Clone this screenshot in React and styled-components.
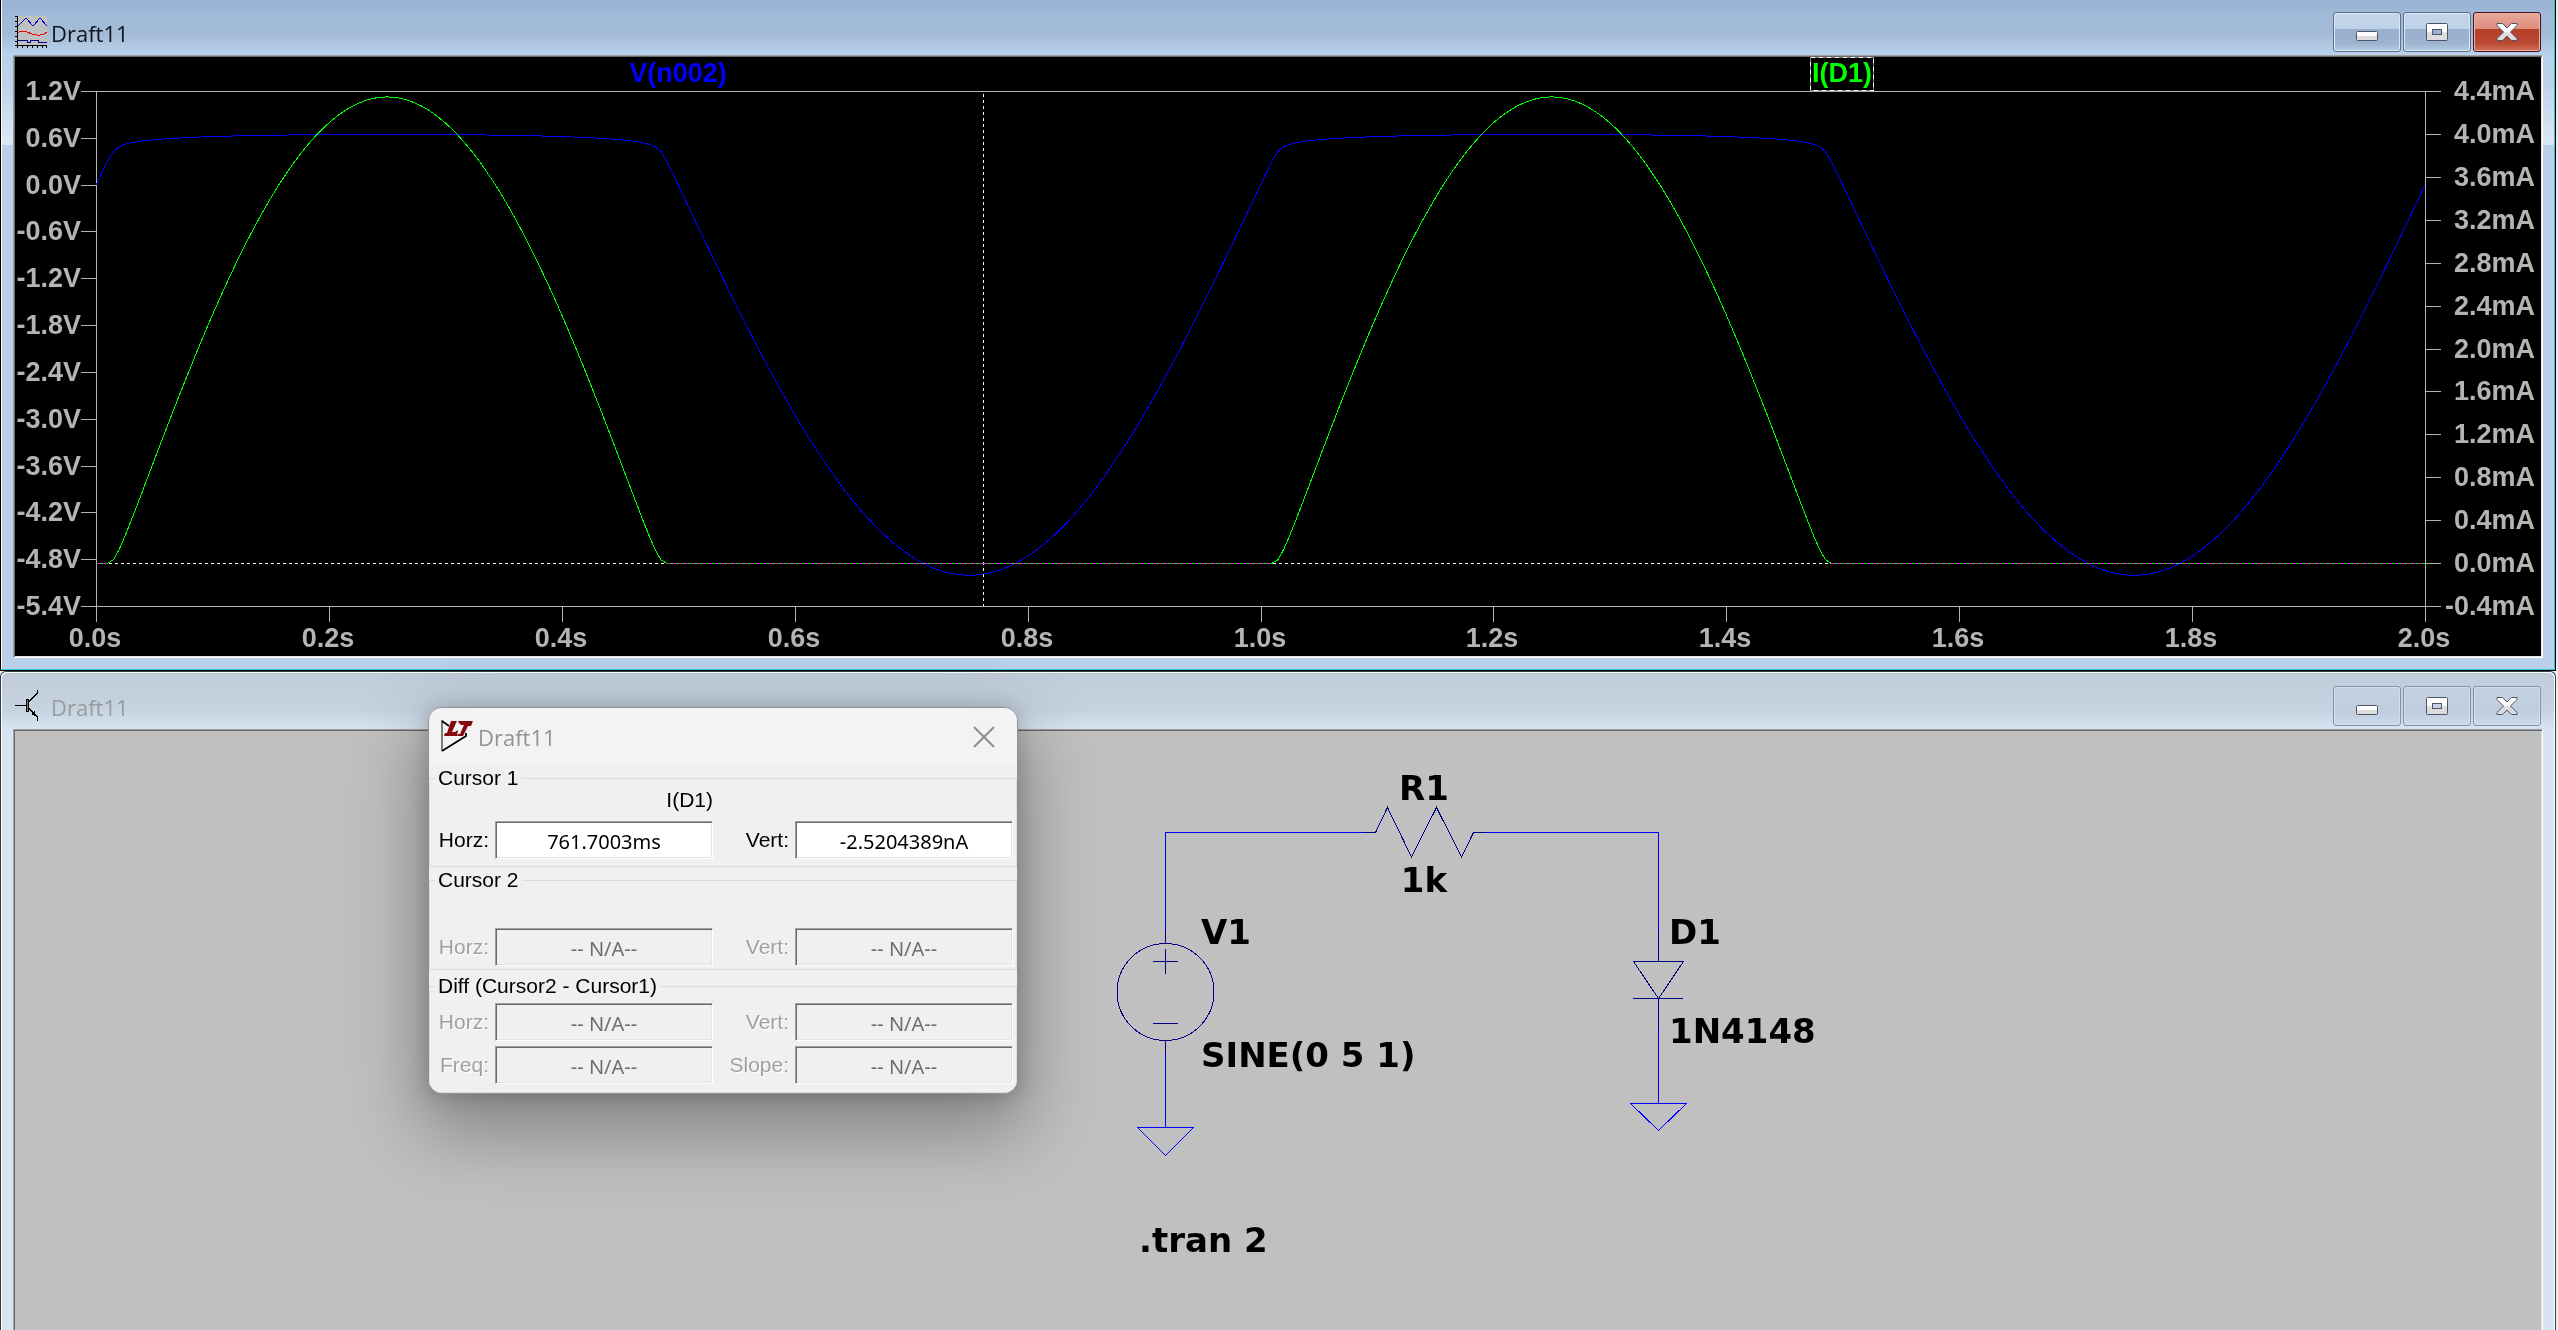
import React, { useLayoutEffect, useMemo, useRef, useState } from "react";
import styled, { createGlobalStyle, css } from "styled-components";

const GlobalStyle = createGlobalStyle`
  * { box-sizing: border-box; }
  html, body { margin: 0; padding: 0; }
  body { background: #ececec; overflow: hidden; }
`;

const uiFont = `"Liberation Sans", Arial, sans-serif`;
const titleFont = `"Open Sans", "Noto Sans", sans-serif`;
const valueFont = `"Noto Sans", Tahoma, sans-serif`;

/* ---------- desktop and document windows ---------- */

const Desktop = styled.main`
  display: grid;
  grid-template-rows: 671fr 659fr;
  height: 100vh;
  padding-right: 2px;
  overflow: hidden;
  font-family: ${uiFont};
`;

const activeFrame = css`
  border-color: #000;
  border-top-width: 0;
  border-radius: 0;
  background: #b9d1ea;
`;

const inactiveFrame = css`
  border-color: #3c3c44;
  border-bottom-width: 0;
  border-radius: 6px 6px 0 0;
  background: #d7e4f2;
`;

const WindowShell = styled.section`
  position: relative;
  display: flex;
  min-height: 0;
  border: 1px solid;
  ${(p) => (p.$active ? activeFrame : inactiveFrame)}
`;

const WindowFrame = styled.div`
  flex: 1;
  min-width: 0;
  display: flex;
  flex-direction: column;
  padding: 0 11px ${(p) => (p.$active ? 11 : 0)}px;
  border-style: solid;
  border-color: #fff;
  border-width: ${(p) => (p.$active ? "0 1px 1px" : "1px 1px 0")};
  border-radius: inherit;
  ${(p) =>
    p.$active
      ? css`
          border-right-color: #35c4e0;
          border-bottom-color: #35c4e0;
          background:
            linear-gradient(#98b3d1, #9fbad8 16px, #a3bbd6 34px, #b9d1ea 54px) 0 0 / 100% 55px no-repeat,
            linear-gradient(#b9d1ea, #bdd3eb 30px, #dbe7f4 86px, #dbe7f4) 0 55px / 100% 90px no-repeat,
            #b9cfea;
        `
      : css`
          background:
            linear-gradient(#bccad8, #c2cedb 10px, #c5d2e0 36px, #d7e4f2 56px) 0 0 / 100% 56px no-repeat,
            #d7e4f2;
        `}
`;

const TitleBar = styled.header`
  flex: none;
  display: flex;
  align-items: center;
  height: ${(p) => (p.$active ? 55 : 56)}px;
  padding: ${(p) => (p.$active ? "9px 2px 0" : "10px 2px 0")};
  gap: 4px;
`;

const WindowTitle = styled.h2`
  flex: 1;
  margin: 0;
  padding-top: 1px;
  font: 400 22px/32px ${titleFont};
  color: ${(p) => (p.$active ? "#10141c" : "#9a9a9a")};
`;

const ButtonGroup = styled.div`
  display: flex;
  gap: 2px;
`;

const tones = {
  active: css`
    border-color: #5d6f8a;
    background: linear-gradient(#c3d5ea, #bdd1e8 16px, #98b0cd 16px, #9cb4d0 30px, #b4cbe4);
    box-shadow: inset 0 0 0 1px #dbe8f6;
  `,
  inactive: css`
    border-color: #8292ac;
    background: linear-gradient(#c4d1e0, #c2cfdf 16px, #bfcde0 24px, #cbd9ea);
    box-shadow: inset 0 0 0 1px #d3dfec;
  `,
  danger: css`
    border-color: #47101c;
    background: linear-gradient(#e7a99b, #de8c7c 16px, #b5402a 16px, #bb4832 30px, #d0705a);
    box-shadow: inset 0 0 0 1px #eab5a8;
  `,
};

const CaptionButton = styled.button`
  display: flex;
  align-items: center;
  justify-content: center;
  width: 68px;
  height: 40px;
  padding: 0;
  border: 1px solid;
  border-radius: 3px;
  ${(p) => tones[p.$tone]}
`;

const Client = styled.div`
  flex: 1;
  min-height: 0;
  padding: 1px;
  overflow: hidden;
  border-style: solid;
  border-width: 1px 1px ${(p) => (p.$open ? 0 : 1)}px;
  border-color: #a0a0a0 #fff #fff #a0a0a0;
  background: ${(p) => p.$fill};
  box-shadow: inset 1px 1px 0 #696969, inset -1px ${(p) => (p.$open ? 0 : -1)}px 0 #e3e3e3;
`;

const Fill = styled.div`
  width: 100%;
  height: 100%;
  overflow: hidden;
`;

const Drawing = styled.svg`
  display: block;
`;

const PlotIcon = () => (
  <Drawing width="32" height="32" viewBox="0 0 32 32" shapeRendering="crispEdges" fill="none" aria-hidden="true">
    <rect x="3" width="29" height="29" fill="#c0c0c0" />
    <path d="M2.5 0V32M0 .5h2M0 5.500h2M0 10.500h2M0 15.500h2M0 20.500h2M0 25.500h2M0 29.500h32M7.500 30v2M12.500 30v2M17.500 30v2M22.500 30v2M27.500 30v2M31.500 30v2" stroke="#000" />
    <path d="M3 10l8-8 7 8 7-8 7 8" stroke="#0000c8" />
    <path d="M3 16.500c6-3 10 0 14 1.500s11 2 15-2" stroke="#f00000" />
    <path d="M3 24.500h9v2h3v-2h8v2h9" stroke="#000090" />
  </Drawing>
);

const TransistorIcon = () => (
  <Drawing width="32" height="32" viewBox="0 0 32 32" shapeRendering="crispEdges" fill="none" stroke="#000" aria-hidden="true">
    <path d="M0 15.500h11M14 11.500l8.500-8.500V0M14 18.500l8.500 8.500v4" />
    <rect x="11.500" y="9.500" width="2" height="12" fill="#777" />
    <path d="M16 24l4-4v3l3 4.500z" fill="#000" stroke="none" />
  </Drawing>
);

const LogoIcon = () => (
  <Drawing width="34" height="34" viewBox="0 0 34 34" aria-hidden="true">
    <path d="M1 0v31" stroke="#555" strokeWidth="1.500" fill="none" />
    <path d="M1 1l7 5M1 31l24-15v-3" stroke="#000" strokeWidth="1.800" fill="none" />
    <path d="M10 1h6l-1 2-4 9h3l3-2-1 6H3l1-3h2z" fill="#86080e" />
    <path d="M17 1h15l-2 5h-3l-4 8-1 2h-6l1-2h2l4-9h-3l-2-2z" fill="#86080e" />
  </Drawing>
);

const CaptionGlyph = ({ kind, hole }) => (
  <Drawing width="22" height="18" viewBox="0 0 22 18" aria-hidden="true">
    <defs>
      <linearGradient id={`glyph-${kind}`} x1="0" y1="0" x2="0" y2="1">
        <stop offset="0.450" stopColor="#fff" />
        <stop offset="0.550" stopColor="#dcdcdc" />
      </linearGradient>
    </defs>
    <g fill={`url(#glyph-${kind})`} stroke="#4e5466">
      {kind === "min" && <rect x="0.500" y="8.500" width="21" height="9" rx="1" />}
      {kind === "max" && (
        <>
          <rect x="0.500" y="0.500" width="21" height="17" rx="1" />
          <rect x="6.500" y="6.500" width="9" height="5" fill={hole} />
        </>
      )}
      {kind === "close" && (
        <path d="M1 .5h5.500L11 5 15.500.5H21v2L14.500 9l6.500 6.500v2h-5.500L11 13l-4.500 4.500H1v-2L7.500 9 1 2.500z" strokeLinejoin="round" />
      )}
    </g>
  </Drawing>
);

function DocumentWindow({ title, icon, active, fill, children, overlay }) {
  const tone = active ? "active" : "inactive";
  return (
    <WindowShell $active={active} aria-label={title}>
      <WindowFrame $active={active}>
        <TitleBar $active={active}>
          {icon}
          <WindowTitle $active={active}>{title}</WindowTitle>
          <ButtonGroup>
            <CaptionButton type="button" $tone={tone} aria-label="Minimize">
              <CaptionGlyph kind="min" />
            </CaptionButton>
            <CaptionButton type="button" $tone={tone} aria-label="Maximize">
              <CaptionGlyph kind="max" hole={active ? "#98b4d0" : "#c5d1e0"} />
            </CaptionButton>
            <CaptionButton type="button" $tone={active ? "danger" : tone} aria-label="Close">
              <CaptionGlyph kind="close" />
            </CaptionButton>
          </ButtonGroup>
        </TitleBar>
        <Client $fill={fill} $open={!active}>
          {children}
        </Client>
      </WindowFrame>
      {overlay}
    </WindowShell>
  );
}

/* ---------- waveform plot ---------- */

const AxisText = styled.text`
  font: 700 27px ${uiFont};
  fill: #b4b4b4;
`;

const TraceName = styled(AxisText)`
  fill: ${(p) => p.$color};
`;

function useSize() {
  const ref = useRef(null);
  const [size, setSize] = useState({ width: 0, height: 0 });
  useLayoutEffect(() => {
    const node = ref.current;
    const read = () => setSize({ width: node.clientWidth, height: node.clientHeight });
    read();
    const observer = new ResizeObserver(read);
    observer.observe(node);
    return () => observer.disconnect();
  }, []);
  return [ref, size];
}

// 1N4148 fed from a 5 V, 1 Hz sine through 1 kOhm: bisect for the diode voltage.
function solveDiode(source) {
  const diodeCurrent = (v) => 2.52e-9 * (Math.exp(v / 0.0453) - 1);
  let lo = -5.1;
  let hi = 1;
  for (let i = 0; i < 50; i += 1) {
    const mid = (lo + hi) / 2;
    if (diodeCurrent(mid) > (source - mid) / 1000) hi = mid;
    else lo = mid;
  }
  return { volts: lo, amps: diodeCurrent(lo) };
}

const T_END = 2;
const V_TOP = 1.2;
const V_BOTTOM = -5.4;
const I_TOP = 4.4;
const I_BOTTOM = -0.4;
const CURSOR = 0.7617003;
const range = (n) => Array.from({ length: n }, (_, i) => i);
const fixed = (n) => (Math.abs(n) < 0.01 ? "0.0" : n.toFixed(1));

function WaveformPlot() {
  const [ref, { width, height }] = useSize();
  const samples = useMemo(
    () => range(401).map((i) => ({ t: i / 200, ...solveDiode(5 * Math.sin((2 * Math.PI * i) / 200)) })),
    []
  );

  const left = 81;
  const right = width - 116;
  const top = 34;
  const bottom = height - 50;
  const px = (n) => Math.round(n) + 0.5;
  const x = (t) => left + (t / T_END) * (right - left);
  const yV = (v) => top + ((V_TOP - v) / (V_TOP - V_BOTTOM)) * (bottom - top);
  const yI = (i) => top + ((I_TOP - i) / (I_TOP - I_BOTTOM)) * (bottom - top);
  const line = (f) => samples.map((s) => `${x(s.t).toFixed(1)},${(f(s) + 0.5).toFixed(1)}`).join(" ");
  const name2 = x(1.5);

  return (
    <Fill ref={ref}>
      {width > 0 && (
        <Drawing width={width} height={height} role="img" aria-label="V(n002) and I(D1) against time">
          <g stroke="#b4b4b4" shapeRendering="crispEdges" fill="none">
            <path d={`M${px(left)} ${top}V${bottom + 15}M${px(right)} ${top}V${bottom + 15}`} />
            <path d={`M${left - 15} ${px(top)}H${right + 16}M${left - 15} ${px(bottom)}H${right + 16}`} />
            {range(12).map((i) => (
              <path key={i} d={`M${left - 15} ${px(yV(V_TOP - i * 0.6))}h15`} />
            ))}
            {range(13).map((i) => (
              <path key={i} d={`M${right} ${px(yI(I_TOP - i * 0.4))}h16`} />
            ))}
            {range(11).map((i) => (
              <path key={i} d={`M${px(x(i * 0.2))} ${bottom}v16`} />
            ))}
          </g>

          <g fill="none" shapeRendering="crispEdges">
            <polyline points={line((s) => yV(s.volts))} stroke="#0000ff" />
            <polyline points={line((s) => yI(s.amps * 1000))} stroke="#00ff00" />
            <g stroke="#fff" strokeDasharray="3 3" style={{ mixBlendMode: "difference" }}>
              <path d={`M${left + 1} ${px(yI(0))}H${right}`} />
              <path d={`M${px(x(CURSOR))} ${top + 3}V${bottom}`} />
            </g>
          </g>

          {range(12).map((i) => (
            <AxisText key={i} x={left - 15} y={Math.round(yV(V_TOP - i * 0.6)) + 9} textAnchor="end">
              {fixed(V_TOP - i * 0.6)}V
            </AxisText>
          ))}
          {range(13).map((i) => (
            <AxisText key={i} x={width - 6} y={Math.round(yI(I_TOP - i * 0.4)) + 9} textAnchor="end">
              {fixed(I_TOP - i * 0.4)}mA
            </AxisText>
          ))}
          {range(11).map((i) => (
            <AxisText key={i} x={Math.round(x(i * 0.2)) - 1} y={bottom + 41} textAnchor="middle">
              {fixed(i * 0.2)}s
            </AxisText>
          ))}

          <TraceName $color="#0000ff" x={Math.round(x(0.5))} y="25" textAnchor="middle">
            V(n002)
          </TraceName>
          <g fill="none" shapeRendering="crispEdges">
            <rect x={px(name2 - 33)} y="0.5" width="63" height="33" stroke="#808080" />
            <rect x={px(name2 - 33)} y="0.5" width="63" height="33" stroke="#fff" strokeDasharray="4 4" />
          </g>
          <TraceName $color="#00ff00" x={Math.round(name2) - 1} y="25" textAnchor="middle">
            I(D1)
          </TraceName>
        </Drawing>
      )}
    </Fill>
  );
}

/* ---------- schematic ---------- */

const PartText = styled.text`
  font: 700 34px "DejaVu Sans", Verdana, sans-serif;
  fill: #000;
`;

// Coordinates are measured from the corner where V1's wire turns towards R1.
function Schematic() {
  return (
    <Drawing width="100%" height="100%" role="img" aria-label="V1, R1 and D1 in series">
      <g transform="translate(1150 101)">
        <g fill="none" shapeRendering="crispEdges">
          <g stroke="#0000ff">
            <path d="M.5 100V.5H198M320 .5H493.500V100" />
            <path d="M.5 221V295.500M-27.500 295.500H28.500L.5 323.500zM493.500 197V271.500M465.500 271.500H521.500L493.500 298.500z" />
          </g>
          <g stroke="#000080">
            <path d="M198 .5H210.500L222.500-24.500 246.500 25 271.500-24.500 296.500 25 308.500.5H320" />
            <path d="M.5 99V111M.5 209V221M-12 129.500H13M.5 117V142M-12 191.500H13" />
            <circle cx="0.500" cy="160" r="48.500" />
            <path d="M493.500 99V129M468.500 129.500H518.500L493.500 166.500zM468 166.500H518M493.500 166V197" />
          </g>
        </g>
        <PartText x="259" y="-32" textAnchor="middle">R1</PartText>
        <PartText x="259" y="60" textAnchor="middle">1k</PartText>
        <PartText x="36" y="112">V1</PartText>
        <PartText x="36" y="235">SINE(0 5 1)</PartText>
        <PartText x="504" y="112">D1</PartText>
        <PartText x="504" y="211">1N4148</PartText>
        <PartText x="-26" y="420">.tran 2</PartText>
      </g>
    </Drawing>
  );
}

/* ---------- cursor read-out dialog ---------- */

const Dialog = styled.aside`
  position: absolute;
  left: 427px;
  top: 35px;
  width: 590px;
  border: 1px solid #8e9297;
  border-radius: 14px;
  overflow: hidden;
  background: #f0f0f0;
  box-shadow: 0 30px 72px 10px rgba(0, 0, 0, 0.3), 0 2px 20px rgba(0, 0, 0, 0.2);
`;

const DialogBar = styled.header`
  display: flex;
  align-items: center;
  gap: 3px;
  height: 58px;
  padding: 0 22px 0 12px;
  background: #f3f3f3;
`;

const DialogTitle = styled.h3`
  flex: 1;
  margin: 0;
  font: 400 22px/32px ${titleFont};
  color: #929292;
`;

const DialogClose = styled.button`
  padding: 0;
  border: 0;
  background: none;
  color: #8c8c8c;
`;

const Group = styled.fieldset`
  min-width: 0;
  margin: 0 0 ${(p) => p.$after}px;
  padding: 0 0 ${(p) => p.$bottom}px;
  border: 1px solid #dcdcdc;
  font-size: 21px;
`;

const GroupName = styled.legend`
  margin-left: 5px;
  padding: 0 3px;
  line-height: 24px;
  color: #000;
`;

const TraceRow = styled.output`
  display: block;
  width: 283px;
  height: 20px;
  line-height: 20px;
  text-align: right;
`;

const Fields = styled.div`
  display: grid;
  grid-template-columns: 59px 218px 70px 218px;
  column-gap: 6px;
  row-gap: 5px;
  padding-top: ${(p) => p.$top}px;
`;

const FieldLabel = styled.label`
  justify-self: end;
  line-height: 38px;
  color: ${(p) => (p.$off ? "#a0a0a0" : "#000")};
  text-shadow: ${(p) => (p.$off ? "1px 1px 0 #fff" : "none")};
`;

const FieldInput = styled.input`
  width: 100%;
  height: 38px;
  padding: 2px 0 0;
  border: 1px solid;
  border-color: #a0a0a0 #fff #fff #a0a0a0;
  border-radius: 0;
  box-shadow: inset 1px 1px 0 #696969, inset -1px -1px 0 #e3e3e3;
  background: #fff;
  color: #000;
  font: 400 20px ${valueFont};
  text-align: center;

  &:disabled {
    background: #f0f0f0;
    color: #6d6d6d;
  }
`;

const groups = [
  {
    name: "Cursor 1", trace: "I(D1)", top: 11, bottom: 7, after: 1,
    fields: [["Horz:", "761.7003ms"], ["Vert:", "-2.5204389nA"]],
  },
  {
    name: "Cursor 2", trace: "", top: 16, bottom: 3, after: 4, off: true,
    fields: [["Horz:", "-- N/A--"], ["Vert:", "-- N/A--"]],
  },
  {
    name: "Diff (Cursor2 - Cursor1)", top: 5, bottom: 8, after: 0, off: true,
    fields: [["Horz:", "-- N/A--"], ["Vert:", "-- N/A--"], ["Freq:", "-- N/A--"], ["Slope:", "-- N/A--"]],
  },
];

function CursorDialog() {
  return (
    <Dialog aria-label="Cursor readings">
      <DialogBar>
        <LogoIcon />
        <DialogTitle>Draft11</DialogTitle>
        <DialogClose type="button" aria-label="Close">
          <Drawing width="22" height="22" viewBox="0 0 22 22" fill="none" stroke="currentColor" strokeWidth="2">
            <path d="M1 1l20 20M21 1L1 21" />
          </Drawing>
        </DialogClose>
      </DialogBar>
      {groups.map((g, gi) => (
        <Group key={g.name} $bottom={g.bottom} $after={g.after}>
          <GroupName>{g.name}</GroupName>
          {g.trace !== undefined && <TraceRow>{g.trace}</TraceRow>}
          <Fields $top={g.top}>
            {g.fields.map(([label, value], i) => {
              const id = `reading-${gi}-${i}`;
              return (
                <React.Fragment key={id}>
                  <FieldLabel htmlFor={id} $off={g.off}>{label}</FieldLabel>
                  <FieldInput id={id} defaultValue={value} disabled={g.off} />
                </React.Fragment>
              );
            })}
          </Fields>
        </Group>
      ))}
    </Dialog>
  );
}

export default function App() {
  return (
    <>
      <GlobalStyle />
      <Desktop>
        <DocumentWindow title="Draft11" icon={<PlotIcon />} fill="#000" active>
          <WaveformPlot />
        </DocumentWindow>
        <DocumentWindow title="Draft11" icon={<TransistorIcon />} fill="#c0c0c0" overlay={<CursorDialog />}>
          <Schematic />
        </DocumentWindow>
      </Desktop>
    </>
  );
}
